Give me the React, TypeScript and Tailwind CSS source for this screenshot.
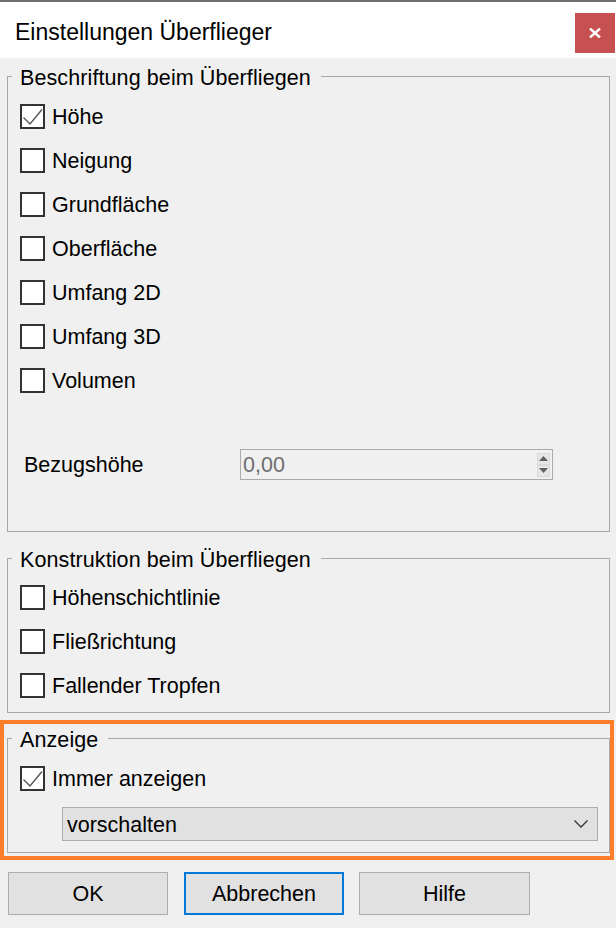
import type { FC, ReactNode } from 'react';

const FONT = { fontFamily: '"Liberation Sans", Arial, sans-serif' };

const CheckBox: FC<{ checked?: boolean; label: string }> = ({ checked, label }) => (
  <div className="flex h-[44px] items-center">
    <div className="relative h-[25px] w-[25px] shrink-0 border-2 border-[#333333] bg-white">
      {checked ? (
        <svg className="absolute -left-[2px] -top-[2px]" width="25" height="25" viewBox="0 0 25 25">
          <polyline points="3.5,13.5 10,20 22,5.5" fill="none" stroke="#555555" strokeWidth="1.4" />
        </svg>
      ) : null}
    </div>
    <span className="ml-[7px] pt-[4px] text-[21.5px] leading-none text-black">{label}</span>
  </div>
);

const GroupBox: FC<{ title: string; className: string; children: ReactNode }> = ({ title, className, children }) => (
  <fieldset className={`border border-[#a8a8a8] pl-[4px] ${className}`}>
    <legend className="pl-[8px] pr-[10px] text-[21.5px] leading-[24px] text-black">
      <span className="inline-block translate-y-[2px] tracking-[0.1px]">{title}</span>
    </legend>
    {children}
  </fieldset>
);

const Button: FC<{ label: string; width: string; focused?: boolean }> = ({ label, width, focused }) => (
  <button
    type="button"
    className={`flex h-[43px] items-center justify-center bg-[#e1e1e1] pt-[2px] text-[21.5px] text-black ${width} ${
      focused ? 'border-2 border-[#0078d7]' : 'border border-[#adadad]'
    }`}
  >
    {label}
  </button>
);

const App: FC = () => {
  const labels = ['Höhe', 'Neigung', 'Grundfläche', 'Oberfläche', 'Umfang 2D', 'Umfang 3D', 'Volumen'];

  return (
    <div className="flex h-[928px] w-[616px] flex-col bg-[#f0f0f0]" style={FONT}>
      <div className="h-[2px] bg-[#707070]" />
      <div className="flex h-[56px] items-start justify-between bg-white">
        <span className="ml-[15px] mt-[15px] text-[23px] leading-[30px] text-black">Einstellungen Überflieger</span>
        <div className="mr-[1px] mt-[11px] flex h-[40px] w-[40px] items-center justify-center bg-[#c75050]">
          <svg width="12" height="10" viewBox="0 0 12 10">
            <path d="M1 0.5 L11 9.5 M11 0.5 L1 9.5" stroke="white" strokeWidth="2.4" />
          </svg>
        </div>
      </div>

      <GroupBox title="Beschriftung beim Überfliegen" className="ml-[7px] mr-[6px] mt-[6px] h-[468px]">
        <div className="ml-[8px] mt-[6px] flex flex-col">
          {labels.map((l, i) => (
            <CheckBox key={l} label={l} checked={i === 0} />
          ))}
        </div>
        <div className="mt-[47px] flex h-[31px] items-center pl-[12px]">
          <span className="w-[216px] pt-[3px] text-[21.5px] leading-none text-black">Bezugshöhe</span>
          <div className="flex h-[31px] w-[313px] items-center justify-between border border-[#ababab] bg-[#f0f0f0] pl-[2px] pr-[2px]">
            <span className="pt-[3px] text-[21.5px] leading-none text-[#6d6d6d]">0,00</span>
            <div className="flex flex-col">
              <div className="flex h-[12px] w-[13px] items-center justify-center border border-[#dadada] bg-[#e6e6e6]">
                <svg width="9" height="5" viewBox="0 0 9 5">
                  <polygon points="0,5 4.5,0 9,5" fill="#606060" />
                </svg>
              </div>
              <div className="flex h-[12px] w-[13px] items-center justify-center border border-[#dadada] bg-[#e6e6e6]">
                <svg width="9" height="5" viewBox="0 0 9 5">
                  <polygon points="0,0 9,0 4.5,5" fill="#606060" />
                </svg>
              </div>
            </div>
          </div>
        </div>
      </GroupBox>

      <GroupBox title="Konstruktion beim Überfliegen" className="ml-[7px] mr-[6px] mt-[14px] h-[167px]">
        <div className="ml-[8px] mt-[5px] flex flex-col">
          <CheckBox label="Höhenschichtlinie" />
          <CheckBox label="Fließrichtung" />
          <CheckBox label="Fallender Tropfen" />
        </div>
      </GroupBox>

      <div className="mr-[2px] mt-[7px] flex h-[140px] flex-col border-4 border-[#fd7e2a]">
        <GroupBox title="Anzeige" className="ml-[3px] mt-[2px] h-[127px]">
          <div className="ml-[8px] mt-[6px]">
            <CheckBox label="Immer anzeigen" checked />
          </div>
          <div className="ml-[50px] mt-[7px] flex h-[34px] w-[536px] items-center justify-between border border-[#adadad] bg-[#e1e1e1] pl-[4px] pr-[9px]">
            <span className="pt-[3px] text-[21.5px] leading-none text-black">vorschalten</span>
            <svg width="14" height="8" viewBox="0 0 14 8">
              <polyline points="0.5,0.5 7,7 13.5,0.5" fill="none" stroke="#333333" strokeWidth="1.3" />
            </svg>
          </div>
        </GroupBox>
      </div>

      <div className="ml-[8px] mt-[12px] flex">
        <Button label="OK" width="w-[160px]" />
        <div className="ml-[16px]">
          <Button label="Abbrechen" width="w-[160px]" focused />
        </div>
        <div className="ml-[15px]">
          <Button label="Hilfe" width="w-[171px]" />
        </div>
      </div>
    </div>
  );
};

export default App;
